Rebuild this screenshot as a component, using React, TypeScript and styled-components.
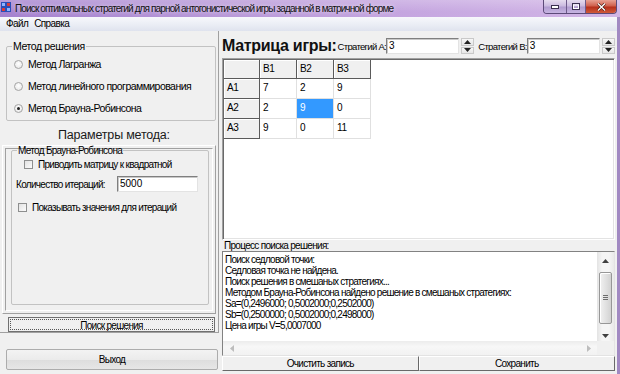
import React from "react";
import styled, { createGlobalStyle, css } from "styled-components";

const SANS = `"Liberation Sans", Arial, sans-serif`;

const smallFont = css`
  font-family: ${SANS};
  font-size: 10px;
  letter-spacing: -0.7px;
`;

const normalFont = css`
  font-family: ${SANS};
  font-size: 10.5px;
  letter-spacing: -0.55px;
`;

const Global = createGlobalStyle`
  html, body { margin: 0; padding: 0; width: 620px; height: 374px; overflow: hidden; background: #f0f0f0; }
  #root { width: 620px; height: 374px; }
  * { box-sizing: border-box; }
`;

const Window = styled.div`
  width: 620px;
  height: 374px;
  display: flex;
  flex-direction: column;
  font-family: ${SANS};
  font-size: 11px;
  color: #000;
  background: #f0f0f0;
  overflow: hidden;
`;

const TitleBar = styled.div`
  height: 17px;
  flex: none;
  display: flex;
  align-items: flex-start;
  padding-left: 1px;
  background: linear-gradient(180deg, rgba(255, 255, 255, 0.22), rgba(255, 255, 255, 0) 70%),
    linear-gradient(90deg, #a582cf 0%, #b898d8 35%, #c7a8e1 70%, #d2b6e6 100%);
`;

const TitleIcon = styled.svg`
  width: 10px;
  height: 10px;
  margin-top: 2px;
  flex: none;
`;

const TitleText = styled.div`
  ${smallFont};
  letter-spacing: -0.86px;
  line-height: 13px;
  margin: 2px 0 0 4px;
  white-space: nowrap;
  color: #111;
  text-shadow: 0 0 4px rgba(255, 255, 255, 0.8);
`;

const CaptionGroup = styled.div`
  margin-left: auto;
  margin-right: 3px;
  display: flex;
  height: 14px;
  border: 1px solid #5c4a78;
  border-top: none;
  border-radius: 0 0 4px 4px;
  overflow: hidden;
`;

const CaptionBtn = styled.div<{ $w: number; $close?: boolean }>`
  width: ${(p) => p.$w}px;
  height: 100%;
  display: flex;
  align-items: center;
  justify-content: center;
  border-left: 1px solid #6d5a8a;
  &:first-child { border-left: none; }
  ${(p) =>
    p.$close
      ? css`
          background: linear-gradient(180deg, #e8a093 0%, #d0614e 45%, #b7301c 55%, #cf5a3a 100%);
        `
      : css`
          background: linear-gradient(180deg, #e6dcef 0%, #cbbbe0 45%, #b19cd0 55%, #c7b5e2 100%);
        `}
`;

const Frame = styled.div`
  flex: 1;
  display: flex;
  flex-direction: column;
  border-right: 3px solid #a189c2;
  min-height: 0;
`;

const MenuBar = styled.div`
  height: 14px;
  flex: none;
  display: flex;
  align-items: center;
  gap: 6px;
  padding-left: 6px;
  background: linear-gradient(180deg, #f7f8fc 0%, #e9ecf4 60%, #dfe3ee 100%);
`;

const MenuItem = styled.span`
  ${smallFont};
  letter-spacing: -0.6px;
  line-height: 12px;
`;

const Body = styled.div`
  flex: 1;
  display: flex;
  min-height: 0;
`;

const LeftCol = styled.div`
  width: 219px;
  flex: none;
  display: flex;
  flex-direction: column;
`;

const LeftPane = styled.div`
  height: 302px;
  display: flex;
  flex-direction: column;
  border-right: 1px solid #a0a0a0;
  border-bottom: 1px solid #a0a0a0;
`;

const GroupBox = styled.fieldset`
  margin: 9px 2px 0 6px;
  padding: 0 0 5px 0;
  border: 1px solid #c2c2c2;
  border-radius: 2px;
  min-width: 0;
`;

const GroupLegend = styled.legend<{ $small?: boolean }>`
  padding: 0 1px;
  margin-left: 5px;
  ${normalFont};
  letter-spacing: -0.4px;
  line-height: 13px;
  ${(p) =>
    p.$small &&
    css`
      ${smallFont};
      line-height: 11px;
    `}
`;

const RadioList = styled.div`
  display: flex;
  flex-direction: column;
  gap: 8px;
  padding: 4px 0 0 7px;
`;

const RadioRow = styled.label`
  display: flex;
  align-items: center;
  gap: 5px;
  height: 14px;
  ${normalFont};
  white-space: nowrap;
`;

const RadioDot = styled.span<{ $on?: boolean }>`
  width: 9px;
  height: 9px;
  flex: none;
  border-radius: 50%;
  border: 1px solid #a4a4a4;
  background: radial-gradient(circle at 50% 40%, #ffffff 0%, #e4e4e4 100%);
  display: flex;
  align-items: center;
  justify-content: center;
  &::after {
    content: "";
    display: ${(p) => (p.$on ? "block" : "none")};
    width: 3px;
    height: 3px;
    border-radius: 50%;
    background: #222;
  }
`;

const Heading = styled.div`
  margin-top: 5px;
  height: 18px;
  font-size: 12.5px;
  letter-spacing: -0.2px;
  line-height: 18px;
  text-align: center;
  padding-left: 10px;
  color: #1a1a1a;
`;

const BevelOuter = styled.div`
  margin: 1px 2px 0 2px;
  height: 169px;
  border: 1px solid;
  border-color: #ffffff #a0a0a0 #a0a0a0 #ffffff;
  padding: 2px;
  display: flex;
`;

const BevelInner = styled.div`
  flex: 1;
  border: 1px solid;
  border-color: #a0a0a0 #ffffff #ffffff #a0a0a0;
  padding: 0 3px 5px 5px;
  display: flex;
`;

const ParamGroup = styled.fieldset`
  flex: 1;
  margin: -4px 0 0 0;
  padding: 0;
  border: 1px solid #c2c2c2;
  border-radius: 2px;
  display: flex;
  flex-direction: column;
  ${smallFont};
  min-width: 0;
`;

const CheckRow = styled.label<{ $indent: number; $top?: number }>`
  display: flex;
  align-items: center;
  gap: 5px;
  height: 12px;
  white-space: nowrap;
  margin-top: ${(p) => p.$top ?? 0}px;
  padding-left: ${(p) => p.$indent}px;
`;

const CheckBox = styled.span`
  width: 9px;
  height: 9px;
  border: 1px solid #8e8f8f;
  background: linear-gradient(135deg, #e2e2e2 0%, #fbfbfb 100%);
  flex: none;
`;

const FieldRow = styled.div`
  display: flex;
  align-items: center;
  height: 16px;
  margin: 6px 0 9px 0;
  padding-left: 4px;
`;

const FieldLabel = styled.span`
  width: 101px;
  white-space: nowrap;
`;

const TextInput = styled.div<{ $w?: number }>`
  width: ${(p) => (p.$w ? `${p.$w}px` : "auto")};
  flex: ${(p) => (p.$w ? "none" : "1")};
  min-width: 0;
  height: 16px;
  background: #fff;
  border: 1px solid;
  border-color: #7f7f7f #e3e3e3 #e3e3e3 #7f7f7f;
  box-shadow: inset 1px 1px 0 #c8c8c8;
  ${smallFont};
  letter-spacing: 0;
  line-height: 14px;
  padding-left: 2px;
`;

const FocusButton = styled.div`
  margin: 3px 3px 0 8px;
  height: 15px;
  border: 1px solid #707070;
  background: #f0f0f0;
  padding: 1px;
  display: flex;
`;

const FocusInner = styled.div`
  flex: 1;
  border: 1px dotted #555;
  ${smallFont};
  line-height: 11px;
  text-align: center;
`;

const ExitButton = styled.div`
  margin: 16px 1px 0 6px;
  height: 21px;
  border: 1px solid #acacac;
  border-radius: 2px;
  background: linear-gradient(180deg, #f3f3f3 0%, #ebebeb 50%, #dddddd 51%, #e6e6e6 100%);
  ${smallFont};
  line-height: 19px;
  text-align: center;
`;

const RightCol = styled.div`
  flex: 1;
  display: flex;
  flex-direction: column;
  padding: 5px 2px 0 3px;
  min-width: 0;
`;

const HeaderRow = styled.div`
  height: 20px;
  display: flex;
  align-items: center;
`;

const MatrixTitle = styled.span`
  font-size: 16px;
  font-weight: bold;
  letter-spacing: -0.3px;
  color: #111;
  margin-right: 1px;
`;

const SmallLabel = styled.span<{ $gap?: number }>`
  ${smallFont};
  font-size: 9.5px;
  margin-left: ${(p) => p.$gap ?? 0}px;
  white-space: nowrap;
`;

const Spinner = styled.div`
  width: 13px;
  height: 16px;
  margin-left: 2px;
  flex: none;
  display: flex;
  flex-direction: column;
  gap: 1px;
`;

const SpinHalf = styled.div`
  flex: 1;
  border: 1px solid #c9c9c9;
  background: linear-gradient(180deg, #f7f7f7, #e6e6e6);
  display: flex;
  align-items: center;
  justify-content: center;
`;

const GridBox = styled.div`
  margin-top: 2px;
  height: 182px;
  background: #fff;
  border: 1px solid;
  border-color: #a0a0a0 #ffffff #ffffff #a0a0a0;
  box-shadow: inset 1px 1px 0 #696969, inset -1px -1px 0 #e3e3e3;
  padding: 1px;
`;

const MatrixGrid = styled.div`
  display: grid;
  grid-template-columns: 36px 37px 37px 37px;
  grid-template-rows: 19px 20px 20px 20px;
  width: max-content;
  ${smallFont};
  letter-spacing: -0.3px;
`;

type CellKind = "fixed" | "normal" | "selected";

const Cell = styled.div<{ $kind: CellKind }>`
  padding: 3px 0 0 3px;
  line-height: 12px;
  border-right: 1px solid #e0e0e0;
  border-bottom: 1px solid #e0e0e0;
  ${(p) =>
    p.$kind === "fixed" &&
    css`
      background: #f0f0f0;
      border-right-color: #5a5a5a;
      border-bottom-color: #5a5a5a;
      box-shadow: inset 1px 1px 0 #ffffff;
    `}
  ${(p) =>
    p.$kind === "selected" &&
    css`
      background: #3399ff;
      color: #fff;
    `}
`;

const SectionLabel = styled.div`
  height: 11px;
  ${smallFont};
  line-height: 11px;
  padding-left: 2px;
`;

const Memo = styled.div`
  height: 105px;
  display: flex;
  flex-direction: column;
  border: 1px solid;
  border-color: #828282 #e3e3e3 #e3e3e3 #828282;
  background: #fff;
`;

const MemoMain = styled.div`
  flex: 1;
  display: flex;
  min-height: 0;
`;

const MemoText = styled.div`
  flex: 1;
  padding: 2px 0 0 2px;
  ${smallFont};
  letter-spacing: -0.75px;
  line-height: 11px;
  white-space: pre;
  overflow: hidden;
`;

const VScroll = styled.div`
  width: 17px;
  display: flex;
  flex-direction: column;
  background: linear-gradient(90deg, #e3e3e3, #f5f5f5 30%, #f5f5f5 70%, #e9e9e9);
`;

const ScrollBtn = styled.div<{ $h?: boolean }>`
  ${(p) => (p.$h ? "width: 17px;" : "height: 17px;")}
  flex: none;
  display: flex;
  align-items: center;
  justify-content: center;
`;

const Track = styled.div`
  flex: 1;
  padding: 3px 2px;
  display: flex;
  flex-direction: column;
`;

const Thumb = styled.div`
  height: 52px;
  border: 1px solid #979797;
  border-radius: 2px;
  background: linear-gradient(90deg, #f1f1f1 0%, #e2e2e2 50%, #d2d2d2 100%);
  box-shadow: inset 1px 1px 0 #fff;
  display: flex;
  align-items: center;
  justify-content: center;
`;

const HScrollRow = styled.div`
  height: 14px;
  display: flex;
`;

const HScroll = styled.div`
  flex: 1;
  display: flex;
  justify-content: space-between;
  background: linear-gradient(180deg, #ececec, #f7f7f7 40%, #f2f2f2);
`;

const ScrollCorner = styled.div`
  width: 17px;
  background: #f0f0f0;
`;

const ButtonRow = styled.div`
  height: 15px;
  display: flex;
`;

const FlatButton = styled.div`
  flex: 1;
  background: #f0f0f0;
  border: 1px solid;
  border-color: #ffffff #696969 #696969 #ffffff;
  ${smallFont};
  line-height: 13px;
  text-align: center;
`;

const Arrow = ({ dir, color = "#404040" }: { dir: "up" | "down" | "left" | "right"; color?: string }) => {
  const pts: Record<string, string> = {
    up: "0,4 3.5,0 7,4",
    down: "0,0 3.5,4 7,0",
    left: "4,0 0,3.5 4,7",
    right: "0,0 4,3.5 0,7",
  };
  const vert = dir === "up" || dir === "down";
  return (
    <svg width={vert ? 7 : 4} height={vert ? 4 : 7} viewBox={vert ? "0 0 7 4" : "0 0 4 7"}>
      <polygon points={pts[dir]} fill={color} />
    </svg>
  );
};

const SpinBox = () => (
  <Spinner>
    <SpinHalf>
      <Arrow dir="up" color="#222" />
    </SpinHalf>
    <SpinHalf>
      <Arrow dir="down" color="#222" />
    </SpinHalf>
  </Spinner>
);

const matrix: { label: string; values: string[] }[] = [
  { label: "A1", values: ["7", "2", "9"] },
  { label: "A2", values: ["2", "9", "0"] },
  { label: "A3", values: ["9", "0", "11"] },
];

const memoLines = [
  "Поиск седловой точки:",
  "Седловая точка не найдена.",
  "Поиск решения в смешаных стратегиях...",
  "Методом Брауна-Робинсона найдено решение в смешаных стратегиях:",
  "Sa=(0,2496000; 0,5002000;0,2502000)",
  "Sb=(0,2500000; 0,5002000;0,2498000)",
  "Цена игры V=5,0007000",
];

export default function App() {
  return (
    <>
      <Global />
      <Window>
        <TitleBar>
          <TitleIcon viewBox="0 0 10 10">
            <rect x="0" y="0" width="10" height="10" fill="#2a4fb8" />
            <rect x="1" y="1" width="3" height="3" fill="#8fb4ff" />
            <rect x="6" y="1" width="3" height="3" fill="#d83a3a" />
            <rect x="1" y="6" width="3" height="3" fill="#d83a3a" />
            <rect x="6" y="6" width="3" height="3" fill="#8fb4ff" />
          </TitleIcon>
          <TitleText>Поиск оптимальных стратегий для парной антогонистической игры заданной в матричной форме</TitleText>
          <CaptionGroup>
            <CaptionBtn $w={22}>
              <svg width="8" height="4" viewBox="0 0 8 4">
                <rect x="0.5" y="0.5" width="7" height="3" fill="#fff" stroke="#3b3050" strokeWidth="1" />
              </svg>
            </CaptionBtn>
            <CaptionBtn $w={19}>
              <svg width="8" height="7" viewBox="0 0 8 7">
                <rect x="0.5" y="0.5" width="7" height="6" fill="none" stroke="#3b3050" strokeWidth="1" />
                <rect x="1.5" y="2" width="5" height="3.5" fill="none" stroke="#fff" strokeWidth="1" />
              </svg>
            </CaptionBtn>
            <CaptionBtn $w={31} $close>
              <svg width="9" height="8" viewBox="0 0 9 8">
                <path d="M1 0.5 L8 7.5 M8 0.5 L1 7.5" stroke="#4a1a12" strokeWidth="2.6" />
                <path d="M1 0.5 L8 7.5 M8 0.5 L1 7.5" stroke="#fff" strokeWidth="1.4" />
              </svg>
            </CaptionBtn>
          </CaptionGroup>
        </TitleBar>
        <Frame>
          <MenuBar>
            <MenuItem>Файл</MenuItem>
            <MenuItem>Справка</MenuItem>
          </MenuBar>
          <Body>
            <LeftCol>
              <LeftPane>
                <GroupBox>
                  <GroupLegend>Метод решения</GroupLegend>
                  <RadioList>
                    <RadioRow>
                      <RadioDot />
                      Метод Лагранжа
                    </RadioRow>
                    <RadioRow>
                      <RadioDot />
                      Метод линейного программирования
                    </RadioRow>
                    <RadioRow>
                      <RadioDot $on />
                      Метод Брауна-Робинсона
                    </RadioRow>
                  </RadioList>
                </GroupBox>
                <Heading>Параметры метода:</Heading>
                <BevelOuter>
                  <BevelInner>
                    <ParamGroup>
                      <GroupLegend $small>Метод Брауна-Робинсона</GroupLegend>
                      <CheckRow $indent={12} $top={2}>
                        <CheckBox />
                        Приводить матрицу к квадратной
                      </CheckRow>
                      <FieldRow>
                        <FieldLabel>Количество итераций:</FieldLabel>
                        <TextInput $w={81}>5000</TextInput>
                      </FieldRow>
                      <CheckRow $indent={6}>
                        <CheckBox />
                        Показывать значения для итераций
                      </CheckRow>
                    </ParamGroup>
                  </BevelInner>
                </BevelOuter>
                <FocusButton>
                  <FocusInner>Поиск решения</FocusInner>
                </FocusButton>
              </LeftPane>
              <ExitButton>Выход</ExitButton>
            </LeftCol>
            <RightCol>
              <HeaderRow>
                <MatrixTitle>Матрица игры:</MatrixTitle>
                <SmallLabel>Стратегий А:</SmallLabel>
                <TextInput>3</TextInput>
                <SpinBox />
                <SmallLabel $gap={4}>Стратегий В:</SmallLabel>
                <TextInput>3</TextInput>
                <SpinBox />
              </HeaderRow>
              <GridBox>
                <MatrixGrid>
                  <Cell $kind="fixed" />
                  <Cell $kind="fixed">B1</Cell>
                  <Cell $kind="fixed">B2</Cell>
                  <Cell $kind="fixed">B3</Cell>
                  {matrix.map((row, r) => (
                    <React.Fragment key={row.label}>
                      <Cell $kind="fixed">{row.label}</Cell>
                      {row.values.map((v, c) => (
                        <Cell key={c} $kind={r === 1 && c === 1 ? "selected" : "normal"}>
                          {v}
                        </Cell>
                      ))}
                    </React.Fragment>
                  ))}
                </MatrixGrid>
              </GridBox>
              <SectionLabel>Процесс поиска решения:</SectionLabel>
              <Memo>
                <MemoMain>
                  <MemoText>{memoLines.join("\n")}</MemoText>
                  <VScroll>
                    <ScrollBtn>
                      <Arrow dir="up" />
                    </ScrollBtn>
                    <Track>
                      <Thumb>
                        <svg width="5" height="6" viewBox="0 0 5 6">
                          <path d="M0 0.5H5M0 2.5H5M0 4.5H5" stroke="#6d6d6d" strokeWidth="1" />
                        </svg>
                      </Thumb>
                    </Track>
                    <ScrollBtn>
                      <Arrow dir="down" />
                    </ScrollBtn>
                  </VScroll>
                </MemoMain>
                <HScrollRow>
                  <HScroll>
                    <ScrollBtn $h>
                      <Arrow dir="left" color="#bdbdbd" />
                    </ScrollBtn>
                    <ScrollBtn $h>
                      <Arrow dir="right" color="#bdbdbd" />
                    </ScrollBtn>
                  </HScroll>
                  <ScrollCorner />
                </HScrollRow>
              </Memo>
              <ButtonRow>
                <FlatButton>Очистить запись</FlatButton>
                <FlatButton>Сохранить</FlatButton>
              </ButtonRow>
            </RightCol>
          </Body>
        </Frame>
      </Window>
    </>
  );
}
